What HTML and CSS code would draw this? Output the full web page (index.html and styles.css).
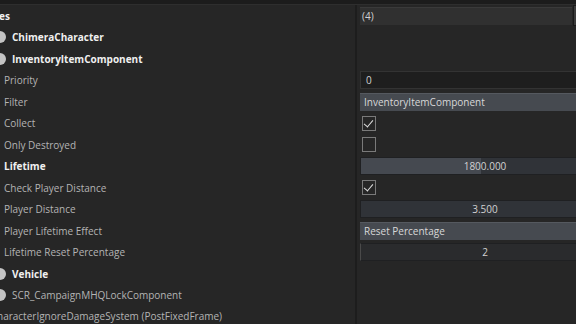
FILE: index.html
```html
<!DOCTYPE html>
<html lang="en">

<head>
    <title>Properties</title>
    <link rel="stylesheet" href="styles.css">
</head>

<body>
    <div class="topbar"></div>
    <div class="panel">
        <div class="row">
            <div class="label bold cut">es</div>
            <div class="value"><div class="field array">(4)</div><div class="scroll-knob"></div></div>
        </div>
        <div class="row">
            <div class="label bold"><span class="dot"></span>ChimeraCharacter</div>
            <div class="value"></div>
        </div>
        <div class="row">
            <div class="label bold"><span class="dot"></span>InventoryItemComponent</div>
            <div class="value"></div>
        </div>
        <div class="row">
            <div class="label">Priority</div>
            <div class="value"><div class="field input">0</div></div>
        </div>
        <div class="row">
            <div class="label">Filter</div>
            <div class="value"><div class="field combo">InventoryItemComponent</div></div>
        </div>
        <div class="row">
            <div class="label">Collect</div>
            <div class="value"><span class="checkbox checked"></span></div>
        </div>
        <div class="row">
            <div class="label">Only Destroyed</div>
            <div class="value"><span class="checkbox"></span></div>
        </div>
        <div class="row">
            <div class="label bold">Lifetime</div>
            <div class="value"><div class="field slider"><div class="fill" style="width: 49%"></div><span>1800.000</span></div></div>
        </div>
        <div class="row">
            <div class="label">Check Player Distance</div>
            <div class="value"><span class="checkbox checked"></span></div>
        </div>
        <div class="row">
            <div class="label">Player Distance</div>
            <div class="value"><div class="field slider"><span>3.500</span></div></div>
        </div>
        <div class="row">
            <div class="label">Player Lifetime Effect</div>
            <div class="value"><div class="field combo">Reset Percentage</div></div>
        </div>
        <div class="row">
            <div class="label">Lifetime Reset Percentage</div>
            <div class="value"><div class="field number"><span>2</span></div></div>
        </div>
        <div class="row">
            <div class="label bold"><span class="dot"></span>Vehicle</div>
            <div class="value"></div>
        </div>
        <div class="row">
            <div class="label"><span class="dot"></span>SCR_CampaignMHQLockComponent</div>
            <div class="value"></div>
        </div>
        <div class="row last">
            <div class="label system">haracterIgnoreDamageSystem (PostFixedFrame)</div>
            <div class="value"></div>
        </div>
    </div>
</body>

</html>
```

FILE: styles.css
```css
body {
    margin: 0;
    padding: 0;
    width: 576px;
    height: 324px;
    overflow: hidden;
    font-family: "Open Sans", sans-serif;
    font-size: 10px;
    background-color: #262626;
    color: #b4b4b4;
}

.topbar {
    height: 4px;
    background-color: #1c1c1c;
    border-bottom: 1px solid #2e2e2e;
}

.panel {
    width: 610px;
}

.row {
    display: grid;
    grid-template-columns: 355px 1fr;
    height: 21.5px;
}

.row.last {
    height: 18px;
}

.label {
    display: flex;
    align-items: center;
    padding-left: 4px;
    white-space: nowrap;
    overflow: hidden;
}

.label.bold {
    font-weight: bold;
    color: #f0f0f0;
}

.label.cut {
    padding-left: 0;
    margin-left: -1px;
}

.label.system {
    padding-left: 0;
    margin-left: -3px;
    align-items: flex-start;
    padding-top: 3px;
}

.dot {
    width: 12px;
    height: 12px;
    border-radius: 50%;
    background-color: #c4c4c4;
    margin-left: -10px;
    margin-right: 6px;
    flex-shrink: 0;
}

.value {
    display: flex;
    align-items: center;
    border-left: 2px solid #1d1d1d;
    padding-left: 3px;
}

.field {
    box-sizing: border-box;
    height: 18px;
    width: 246px;
    display: flex;
    align-items: center;
    padding-left: 4px;
    color: #d2d2d2;
    position: relative;
}

.field.array {
    width: 212px;
    background-color: #303030;
    border-top: 1px solid #3a3a3a;
    padding-left: 2px;
}

.scroll-knob {
    width: 6px;
    height: 19px;
    margin-left: 1px;
    background-color: #3c3c3c;
    border: 1px solid #1a1a1a;
}

.field.input {
    background-color: #1e1e1e;
    border: 1px solid #333333;
    padding-left: 5px;
}

.field.combo {
    background-color: #464a50;
    border-top: 1px solid #55595f;
    color: #d8d8d8;
}

.field.slider {
    background-color: #303338;
    border: 1px solid #1f2022;
    justify-content: center;
}

.field.number {
    background-color: #2a2b2d;
    border: 1px solid #1f2022;
    border-left: 1px solid #4a4a4a;
    justify-content: center;
}

.fill {
    position: absolute;
    left: 0;
    top: 0;
    bottom: 0;
    background-color: #454950;
}

.field span {
    position: relative;
}

.checkbox {
    box-sizing: border-box;
    width: 14px;
    height: 15px;
    margin-left: 2px;
    border: 1px solid #7a7a7a;
    background-color: #262626;
    position: relative;
}

.checkbox.checked::after {
    content: '';
    position: absolute;
    left: 3px;
    top: 1px;
    width: 4px;
    height: 8px;
    border-right: 1.5px solid #e0e0e0;
    border-bottom: 1.5px solid #e0e0e0;
    transform: rotate(40deg);
}
```
